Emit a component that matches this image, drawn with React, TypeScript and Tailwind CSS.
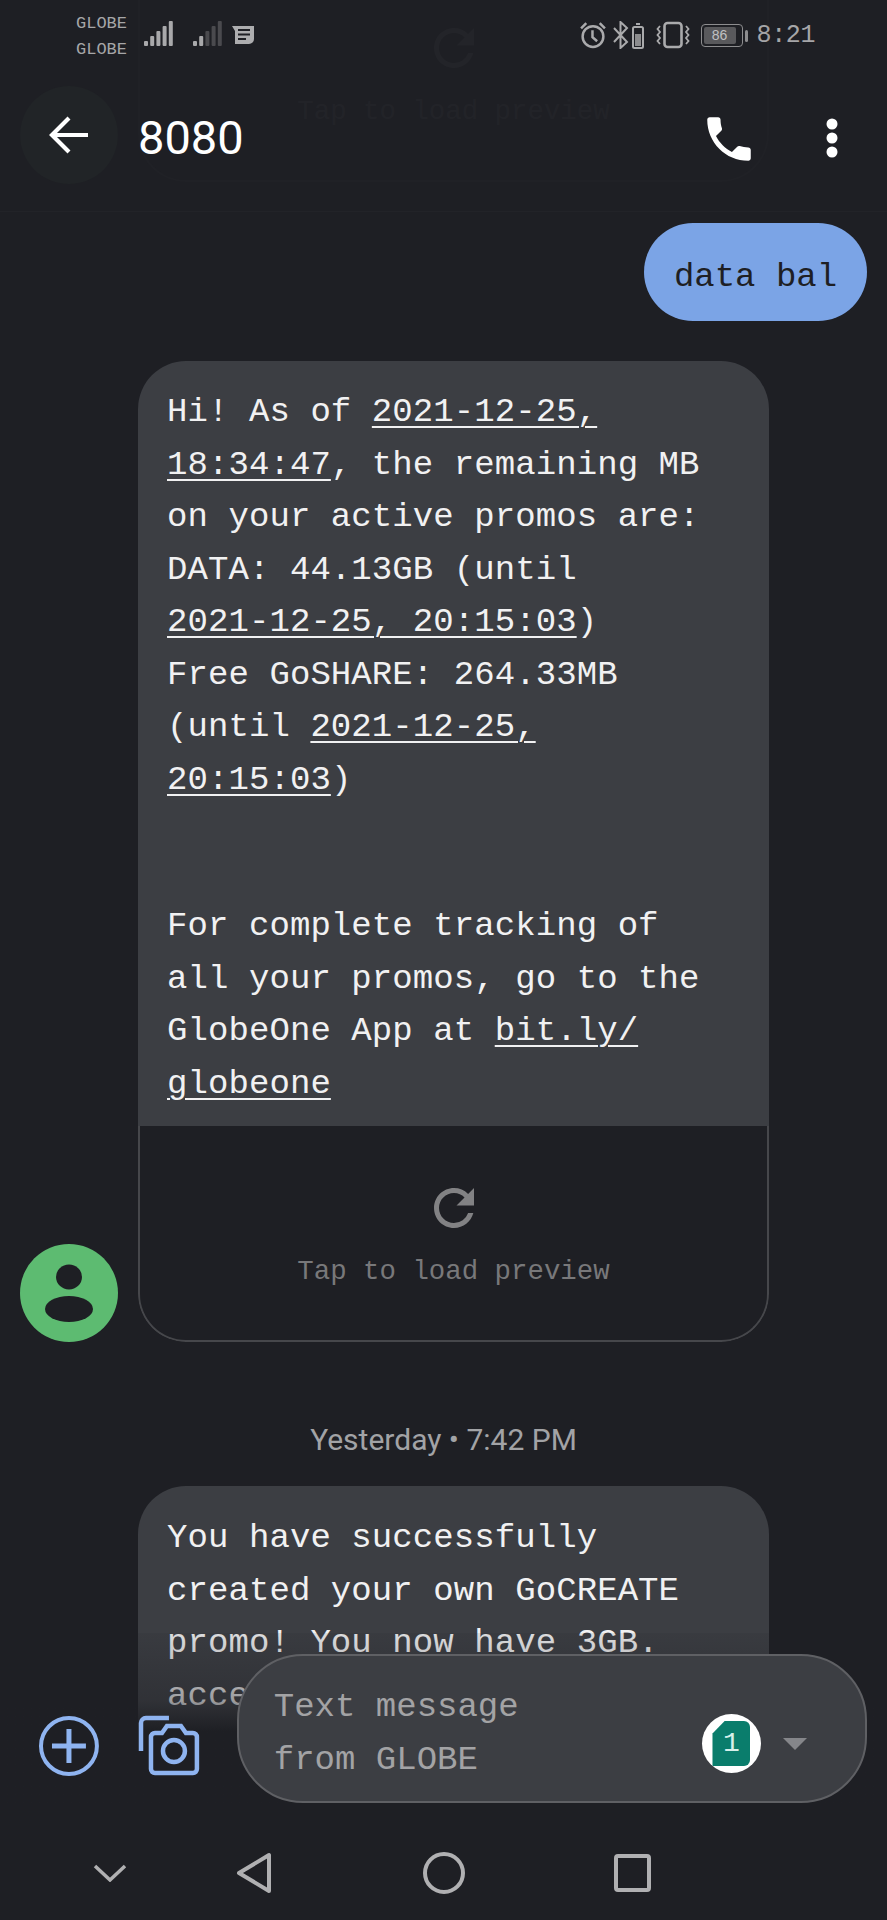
import { MdPhone, MdRefresh } from 'react-icons/md';

const Signal = ({ active }: { active: number }) => (
  <svg width="32" height="28" viewBox="0 0 32 28">
    {[0, 1, 2, 3, 4].map((i) => (
      <rect
        key={i}
        x={2 + i * 6.2}
        y={21 - i * 5}
        width="4"
        height={5 + i * 5}
        rx="1"
        fill={i < active ? '#a9a9ab' : '#4a4a4e'}
      />
    ))}
  </svg>
);

const StatusBar = () => (
  <div className="flex h-[70px] items-start justify-between pl-[76px] pr-[72px] text-[#a6a6a8]">
    <div className="flex items-start">
      <div className="mt-[11px] w-[51px] font-['Liberation_Mono',monospace] text-[17px] leading-[26px]">
        <div>GLOBE</div>
        <div>GLOBE</div>
      </div>
      <div className="ml-[15px] mt-[20px]">
        <Signal active={5} />
      </div>
      <div className="ml-[17px] mt-[20px]">
        <Signal active={2} />
      </div>
      <svg className="ml-[8px] mt-[25px]" width="24" height="21" viewBox="0 0 24 21">
        <path d="M1 1h22v13a5 5 0 0 1-5 5H4V6z" fill="#adadaf" />
        <path d="M7 5h12M7 9.500h12M7 14h8" stroke="#1e1f24" strokeWidth="2" />
      </svg>
    </div>
    <div className="flex items-start">
      <svg className="mt-[21px]" width="28" height="28" viewBox="0 0 27 27" fill="none" stroke="#aaaaac" strokeWidth="2.400">
        <circle cx="13.500" cy="15" r="10" />
        <path d="M13 9v6.500l4.500 4M2 7l5-5M25 7l-5-5" />
      </svg>
      <svg className="ml-[6px] mt-[21px]" width="34" height="28" viewBox="0 0 34 28" fill="none" stroke="#aaaaac" strokeWidth="2">
        <path d="M1 7l13 14-6.500 6V1L14 7 1 21" />
        <rect x="20" y="6" width="10" height="21" rx="1.500" />
        <rect x="22" y="13" width="6" height="12" fill="#8c8c8e" stroke="none" />
        <path d="M23 3h4" />
      </svg>
      <svg className="ml-[9px] mt-[21px]" width="34" height="28" viewBox="0 0 34 28" fill="none" stroke="#aaaaac" strokeWidth="2.600">
        <rect x="8.500" y="2" width="17" height="24" rx="3" />
        <path d="M4 5l-2.500 3 2.500 3-2.500 3 2.500 3-2.500 3 2.500 3M30 5l2.500 3-2.500 3 2.500 3-2.500 3 2.500 3-2.500 3" strokeWidth="1.800" />
      </svg>
      <div className="ml-[11px] mt-[24px] flex items-center">
        <div className="flex h-[23px] w-[42px] items-center rounded-[4px] border border-[#8d8d8f] p-[2px]">
          <div className="h-full w-[32px] rounded-[2px] bg-[#59595c] text-center font-['Liberation_Sans',sans-serif] text-[14px] leading-[17px] text-[#c0c0c2]">
            86
          </div>
        </div>
        <div className="ml-[2px] h-[12px] w-[3px] rounded-sm bg-[#8d8d8f]" />
      </div>
      <div className="ml-[9px] mt-[22px] font-['Liberation_Mono',monospace] text-[25px] leading-[28px] tracking-[-0.4px]">
        8:21
      </div>
    </div>
  </div>
);

const Header = () => (
  <div className="relative flex h-[142px] items-start border-b border-[#222328]">
    <div className="ml-[20px] mt-[16px] flex h-[98px] w-[98px] items-center justify-center rounded-full bg-[#212427]">
      <svg width="40" height="38" viewBox="0 0 40 38" fill="none" stroke="white" strokeWidth="4.200">
        <path d="M39 19H3M20 2L3 19l17 17" />
      </svg>
    </div>
    <div className="ml-[20px] mt-[40px] font-['Roboto',sans-serif] text-[47px] leading-[56px] text-white">8080</div>
    <MdPhone className="absolute left-[700px] top-[40px] text-white" size={58} />
    <svg className="absolute left-[826px] top-[48px]" width="12" height="40" viewBox="0 0 12 40" fill="white">
      <circle cx="6" cy="6" r="5.500" />
      <circle cx="6" cy="20" r="5.500" />
      <circle cx="6" cy="34" r="5.500" />
    </svg>
  </div>
);

const U = ({ children }: { children: React.ReactNode }) => (
  <span className="underline decoration-2 underline-offset-[5px]">{children}</span>
);

const Preview = () => (
  <div className="flex h-[216px] flex-col items-center rounded-b-[48px] border-2 border-t-0 border-[#46474b] pt-[52px]">
    <MdRefresh className="text-[#828284]" size={60} />
    <div className="mt-[16px] font-['Liberation_Mono',monospace] text-[27.400px] leading-[36px] text-[#78787a]">
      Tap to load preview
    </div>
  </div>
);

const Thread = () => (
  <div className="min-h-0 flex-1 overflow-hidden">
    <div className="flex justify-end pr-5 pt-[11px]">
      <div className="flex h-[98px] w-[223px] items-center justify-center rounded-[49px] bg-[#7ba4e6] pt-[11px] font-['Liberation_Mono',monospace] text-[34px] text-[#1e1f24]">
        data bal
      </div>
    </div>

    <div className="mt-10 flex items-end pl-5">
      <div className="flex h-[98px] w-[98px] items-center justify-center rounded-full bg-[#5dbb71]">
        <svg width="52" height="60" viewBox="0 0 52 60" fill="#1e1f24">
          <ellipse cx="26" cy="14" rx="13" ry="12.500" />
          <ellipse cx="26" cy="46" rx="24" ry="13" />
        </svg>
      </div>
      <div className="ml-5 w-[631px] overflow-hidden rounded-[48px]">
        <div className="bg-[#3c3e43] px-[29px] pb-[16px] pt-[25px] font-['Liberation_Mono',monospace] text-[34px] leading-[52.500px] tracking-[0.08px] text-[#f1f1f2]">
          <div>
            Hi! As of <U>2021-12-25,</U>
          </div>
          <div>
            <U>18:34:47</U>, the remaining MB
          </div>
          <div>on your active promos are:</div>
          <div>DATA: 44.13GB (until</div>
          <div>
            <U>2021-12-25, 20:15:03</U>)
          </div>
          <div>Free GoSHARE: 264.33MB</div>
          <div>
            (until <U>2021-12-25,</U>
          </div>
          <div>
            <U>20:15:03</U>)
          </div>
          <div className="h-[94px]" />
          <div>For complete tracking of</div>
          <div>all your promos, go to the</div>
          <div>
            GlobeOne App at <U>bit.ly/</U>
          </div>
          <div>
            <U>globeone</U>
          </div>
        </div>
        <Preview />
      </div>
    </div>

    <div className="mt-[80px] text-center font-['Roboto',sans-serif] text-[30px] leading-9 text-[#a2a3a6]">
      Yesterday • 7:42 PM
    </div>

    <div className="ml-[138px] mt-[28px] w-[631px] rounded-t-[48px] bg-[#3c3e43] px-[29px] pt-[26px] font-['Liberation_Mono',monospace] text-[34px] leading-[52.500px] tracking-[0.08px] text-[#f1f1f2]">
      <div>You have successfully</div>
      <div>created your own GoCREATE</div>
      <div>promo! You now have 3GB.</div>
      <div>acce</div>
      <div className="h-[100px]" />
    </div>
  </div>
);

const Composer = () => (
  <div className="absolute bottom-[117px] left-0 right-0 h-[170px] bg-gradient-to-b from-[#1e1f24]/10 via-[#1e1f24]/40 via-[40%] to-[#1e1f24] to-[58%]">
    <div className="absolute bottom-0 left-0 right-0 flex h-[149px] items-center pr-5">
      <svg className="ml-[38px] mt-[34px]" width="62" height="62" viewBox="0 0 62 62" fill="none" stroke="#8fb4f0" strokeWidth="4">
        <circle cx="31" cy="31" r="28" />
        <path d="M31 14v34M14 31h34" strokeWidth="5" />
      </svg>
      <svg className="ml-[38px] mt-[34px]" width="62" height="62" viewBox="0 0 62 62" fill="none" stroke="#8fb4f0" strokeWidth="4.500">
        <path d="M3 36V8a5 5 0 0 1 5-5h23" />
        <path d="M14 22a4 4 0 0 1 4-4h7l5-7h14l5 7h7a4 4 0 0 1 4 4v32a4 4 0 0 1-4 4H18a4 4 0 0 1-4-4z" transform="translate(-1 0)" />
        <circle cx="36" cy="36" r="11" />
      </svg>
      <div className="ml-[37px] flex h-[149px] w-[631px] items-center rounded-[66px] border-2 border-[#5f6064] bg-[#3c3e43] pl-[35px]">
        <div className="mt-[10px] font-['Liberation_Mono',monospace] text-[34px] leading-[52.500px] text-[#a3a3a5]">
          <div>Text message</div>
          <div>from GLOBE</div>
        </div>
        <div className="ml-auto mt-[30px] flex h-[59px] w-[59px] items-center justify-center overflow-hidden rounded-full bg-white">
          <div className="flex h-[45px] w-[38px] items-center justify-center rounded-br-[6px] rounded-tr-[6px] bg-[#0a7d6c] font-['Liberation_Mono',monospace] text-[28px] text-[#d6f0ea] [clip-path:polygon(32%_0,100%_0,100%_100%,0_100%,0_28%)]">
            1
          </div>
        </div>
        <div className="ml-[22px] mr-[58px] mt-[30px] h-0 w-0 border-x-[12px] border-t-[12px] border-x-transparent border-t-[#85868a]" />
      </div>
    </div>
  </div>
);

const NavBar = () => (
  <div className="flex h-[117px] shrink-0 items-center pt-[22px]">
    <svg className="ml-[93px]" width="34" height="18" viewBox="0 0 34 18" fill="none" stroke="#b0b0b2" strokeWidth="3.500">
      <path d="M2 2l15 14L32 2" />
    </svg>
    <svg className="ml-[109px]" width="35" height="42" viewBox="0 0 35 42" fill="none" stroke="#b0b0b2" strokeWidth="4">
      <path d="M33 3v36L3 21z" strokeLinejoin="round" />
    </svg>
    <svg className="ml-[152px]" width="42" height="42" viewBox="0 0 42 42" fill="none" stroke="#b0b0b2" strokeWidth="4">
      <circle cx="21" cy="21" r="19" />
    </svg>
    <svg className="ml-[149px]" width="37" height="38" viewBox="0 0 37 38" fill="none" stroke="#b0b0b2" strokeWidth="4">
      <rect x="2" y="2" width="33" height="34" rx="2" />
    </svg>
  </div>
);

export default function App() {
  return (
    <div className="relative flex h-[1920px] w-[887px] flex-col overflow-hidden bg-[#1e1f24]">
      {/* preview card of an older message, barely showing through the top bars */}
      <div className="absolute left-[138px] top-[-34px] w-[631px] opacity-[0.05]">
        <Preview />
      </div>
      <StatusBar />
      <Header />
      <Thread />
      <Composer />
      <NavBar />
    </div>
  );
}
